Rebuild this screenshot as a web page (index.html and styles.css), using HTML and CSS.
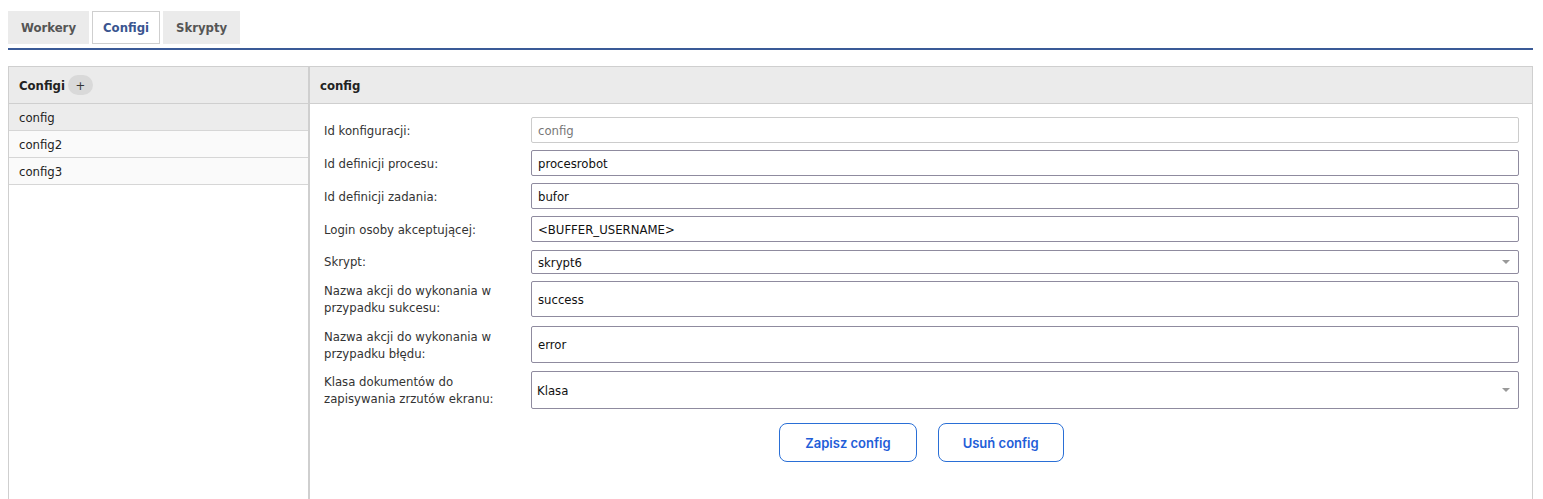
FILE: index.html
```html
<!DOCTYPE html>
<html lang="pl">
<head>
<meta charset="utf-8">
<title>Configi</title>
<link rel="stylesheet" href="styles.css">
</head>
<body>
<nav class="tabs">
  <div class="tab">Workery</div>
  <div class="tab active">Configi</div>
  <div class="tab">Skrypty</div>
</nav>
<main class="panels">
  <section class="list-panel">
    <header class="panel-head">Configi <span class="add">+</span></header>
    <ul class="list">
      <li class="item selected">config</li>
      <li class="item">config2</li>
      <li class="item">config3</li>
    </ul>
  </section>
  <section class="detail-panel">
    <header class="panel-head">config</header>
    <form class="form">
      <div class="row"><label class="lbl">Id konfiguracji:</label><div class="field disabled">config</div></div>
      <div class="row"><label class="lbl">Id definicji procesu:</label><div class="field">procesrobot</div></div>
      <div class="row"><label class="lbl">Id definicji zadania:</label><div class="field">bufor</div></div>
      <div class="row"><label class="lbl">Login osoby akceptującej:</label><div class="field">&lt;BUFFER_USERNAME&gt;</div></div>
      <div class="row"><label class="lbl">Skrypt:</label><div class="field select short">skrypt6<span class="arrow"></span></div></div>
      <div class="row r-success"><label class="lbl">Nazwa akcji do wykonania w<br>przypadku sukcesu:</label><div class="field tall">success</div></div>
      <div class="row r-error"><label class="lbl">Nazwa akcji do wykonania w<br>przypadku błędu:</label><div class="field tall2">error</div></div>
      <div class="row"><label class="lbl">Klasa dokumentów do<br>zapisywania zrzutów ekranu:</label><div class="field select taller">Klasa<span class="arrow"></span></div></div>
      <div class="buttons">
        <button type="button" class="btn save">Zapisz config</button>
        <button type="button" class="btn">Usuń config</button>
      </div>
    </form>
  </section>
</main>
</body>
</html>
```

FILE: styles.css
```css
html, body {
  margin: 0;
  padding: 0;
  background: #fff;
}
body {
  padding: 8px 10px 0 8px;
  font-family: Tahoma, "DejaVu Sans Condensed", "Liberation Sans", sans-serif;
  font-size: 13px;
  color: #222;
}
.tabs {
  display: flex;
  gap: 3px;
  margin-top: 3px;
  padding-bottom: 4px;
  border-bottom: 2px solid #3a5a97;
}
.tab {
  height: 33px;
  box-sizing: border-box;
  padding: 0 12px;
  display: flex;
  align-items: center;
  background: #ebebeb;
  font-weight: bold;
  color: #555;
  border: 1px solid #ebebeb;
}
.tab.active {
  background: #fff;
  border-color: #cfcfcf;
  color: #3a5590;
  padding: 0 10px;
}
.panels {
  display: flex;
  margin-top: 16px;
  height: 440px;
}
.list-panel {
  width: 302px;
  box-sizing: border-box;
  border: 1px solid #cfcfcf;
  border-right: 2px solid #cfcfcf;
}
.detail-panel {
  flex: 1;
  box-sizing: border-box;
  border: 1px solid #cfcfcf;
  border-left: none;
}
.panel-head {
  height: 37px;
  box-sizing: border-box;
  background: #ebebeb;
  border-bottom: 1px solid #cfcfcf;
  display: flex;
  align-items: center;
  padding-left: 10px;
  font-weight: bold;
  color: #222;
}
.add {
  display: inline-flex;
  align-items: center;
  justify-content: center;
  width: 25px;
  height: 20px;
  margin-left: 3px;
  border-radius: 10px;
  background: #d9d9d9;
  font-weight: normal;
  color: #333;
  font-size: 13px;
}
.list {
  list-style: none;
  margin: 0;
  padding: 0;
}
.item {
  height: 27px;
  box-sizing: border-box;
  padding-left: 10px;
  display: flex;
  align-items: center;
  background: #fafafa;
  border-bottom: 1px solid #d6d6d6;
  color: #222;
}
.item.selected {
  background: #ececec;
}
.form {
  padding: 13px 13px 0 14px;
  display: flex;
  flex-direction: column;
  gap: 7px;
}
.row {
  display: flex;
  align-items: center;
}
.r-success {
  margin-bottom: 2px;
}
.r-error {
  margin-bottom: 1px;
}
.lbl {
  width: 207px;
  flex: none;
  line-height: 17px;
  color: #333;
}
.field {
  flex: 1;
  height: 26px;
  box-sizing: border-box;
  border: 1px solid #8f8b9f;
  border-radius: 2px;
  padding-left: 6px;
  display: flex;
  align-items: center;
  position: relative;
  color: #111;
}
.field.disabled {
  border-color: #cccccc;
  color: #777;
}
.field.short {
  height: 24px;
  margin-top: 1px;
}
.field.tall {
  height: 36px;
}
.field.tall2 {
  height: 37px;
}
.field.taller {
  height: 38px;
  padding-left: 5px;
}
.arrow {
  position: absolute;
  right: 8px;
  top: 50%;
  margin-top: -2px;
  border-left: 4px solid transparent;
  border-right: 4px solid transparent;
  border-top: 4px solid #999;
}
.buttons {
  display: flex;
  justify-content: center;
  gap: 21px;
  margin-top: 7px;
}
.btn {
  height: 39px;
  box-sizing: border-box;
  padding: 0 24px;
  background: #fff;
  border: 1px solid #2a6fd6;
  border-radius: 8px;
  font-family: Inter, "Open Sans", sans-serif;
  font-weight: 600;
  font-size: 13px;
  color: #1f5ed8;
}
.btn.save {
  padding: 0 25px;
}
```
